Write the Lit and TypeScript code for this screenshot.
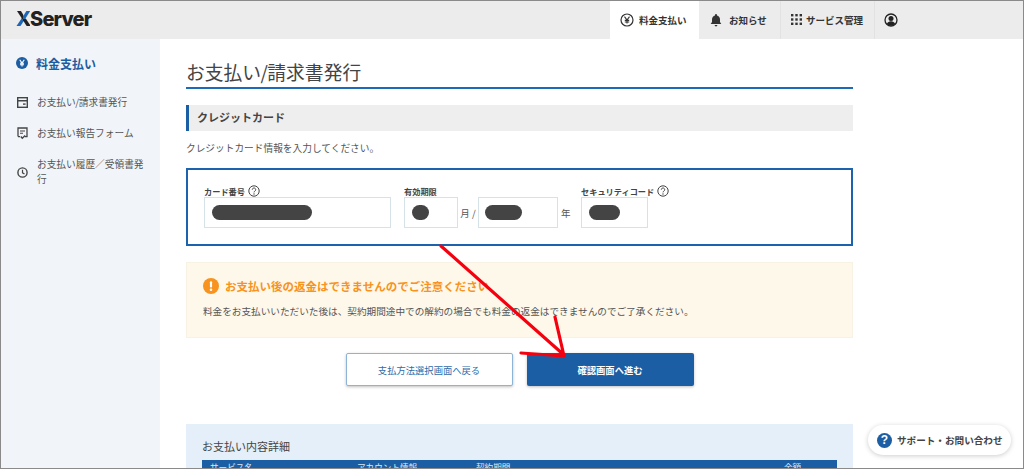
import { LitElement, html, css } from "lit";
import { customElement } from "lit/decorators.js";

const help = html`<svg class="help" width="12" height="12" viewBox="0 0 12 12"><circle cx="6" cy="6" r="5.2" fill="none" stroke="#444" stroke-width="1"/><path d="M4.3 4.7a1.7 1.7 0 1 1 2.6 1.4c-.6.4-.9.6-.9 1.3" fill="none" stroke="#444" stroke-width="1"/><circle cx="6" cy="9" r=".7" fill="#444"/></svg>`;

@customElement("app-root")
export class AppRoot extends LitElement {
  static styles = css`
    :host { display: block; width: 1024px; height: 469px; position: relative; overflow: hidden; font-family: "Noto Sans CJK JP", "Noto Sans", sans-serif; color: #444; background: #fff; }
    .frame { box-sizing: border-box; width: 1024px; height: 469px; border: 1px solid #8a8a8a; display: flex; flex-direction: column; overflow: hidden; }
    header { flex: none; height: 38px; background: #ececec; display: flex; justify-content: space-between; align-items: stretch; padding-left: 15px; }
    .logo { font: 800 20px/37px "Inter", "Liberation Sans", sans-serif; color: #222; letter-spacing: -0.85px; }
    .logo .x { background: conic-gradient(#1c67b8 0 90deg, #222 90deg 180deg, #1c67b8 180deg 270deg, #222 270deg 360deg); -webkit-background-clip: text; background-clip: text; color: transparent; }
    nav { display: flex; }
    .tab { display: flex; align-items: center; gap: 5px; font-size: 9.5px; font-weight: 700; color: #333; border-left: 1px solid #e2e2e2; box-sizing: border-box; padding-bottom: 1px; }
    .tab.active { background: #fff; border-left: 0; width: 89px; padding-left: 10px; }
    .tab.t2 { width: 81px; padding-left: 11px; border-left: 0; gap: 7px; }
    .tab.t3 { width: 94px; padding-left: 10px; gap: 4px; }
    .tab.t4 { width: 149px; padding-left: 9px; }
    .body { flex: 1; display: flex; min-height: 0; }
    aside { flex: none; width: 159px; background: #f1f5f9; box-sizing: border-box; padding: 16px 15px 0 15px; }
    .side-title { display: flex; align-items: center; gap: 8px; font-size: 12px; font-weight: 700; color: #1c5ea3; height: 16px; }
    .side-item { display: flex; align-items: center; gap: 9px; font-size: 9.7px; color: #555; line-height: 15px; margin-left: 1px; }
    .side-item svg { flex: none; }
    .side-list { display: flex; flex-direction: column; margin-top: 24px; gap: 16px; }
    .slash { margin: 0 -0.4px; }
    main { flex: 1; padding: 19px 0 0 26px; min-width: 0; }
    .content { width: 667px; }
    h1 { margin: 0; font-size: 18.8px; font-weight: 400; color: #444; height: 29px; line-height: 27px; border-bottom: 2px solid #1c6ab8; }
    h1 .slash { margin: 0 -0.6px; }
    h2 { margin: 16px 0 0; height: 26px; box-sizing: border-box; background: #eee; border-left: 3px solid #1c5ea3; padding-left: 8px; font-size: 11px; font-weight: 700; line-height: 25px; color: #444; }
    .lead { margin: 10px 0 0; font-size: 9.7px; line-height: 15px; color: #555; }
    .card { margin-top: 12px; height: 78px; box-sizing: border-box; border: 2px solid #1c62ad; padding: 13px 16px 0; display: flex; gap: 13px; }
    .field label { display: flex; align-items: flex-end; gap: 3px; height: 14px; font-size: 8.2px; line-height: 12px; font-weight: 700; color: #444; white-space: nowrap; }
    .inputs { display: flex; align-items: center; }
    .box { box-sizing: border-box; height: 31px; border: 1px solid #d5e2e8; display: flex; align-items: center; padding-left: 7px; }
    .blot { height: 15px; border-radius: 8px; background: #444; }
    .unit { font-size: 9.500px; color: #555; }
    .month { width: 20px; text-align: center; }
    .year { width: 23px; padding-left: 3px; box-sizing: border-box; }
    .sec-code { margin-left: -13px; }
    .warn { margin-top: 16px; height: 76px; box-sizing: border-box; background: #fef8ea; border: 1px solid #f8f2e4; padding: 14px 16px 0; }
    .warn-title { display: flex; align-items: center; gap: 6px; font-size: 11.500px; font-weight: 700; color: #f7931e; height: 18px; }
    .warn p { margin: 9px 0 0; font-size: 9.65px; line-height: 15px; color: #555; white-space: nowrap; }
    .actions { margin-top: 15px; display: flex; justify-content: center; gap: 14px; }
    .btn { box-sizing: border-box; width: 167px; height: 33px; border-radius: 2px; display: flex; align-items: center; justify-content: center; font-size: 9.3px; box-shadow: 0 1px 3px rgba(0,0,0,.25); }
    .btn.sec { background: #fff; border: 1px solid #8db4d6; color: #2e6ba8; }
    .btn.pri { background: #1c5ea3; color: #fff; font-weight: 700; }
    .detail { margin-top: 38px; background: #e5eff9; padding: 15px 16px 0; height: 60px; box-sizing: border-box; }
    .detail h3 { margin: 0; font-size: 11px; font-weight: 400; line-height: 15px; color: #444; }
    .thead { margin-top: 6px; height: 24px; background: #1c5ea3; color: #dfe9f3; font-size: 8.6px; line-height: 14px; display: grid; grid-template-columns: 147px 119px 308px 1fr; padding-left: 8px; }
    .support { position: absolute; left: 868px; top: 425px; width: 143px; height: 30px; border-radius: 15px; background: #fff; box-shadow: 0 1px 5px rgba(0,0,0,.2); display: flex; align-items: center; gap: 5px; padding-left: 9px; box-sizing: border-box; font-size: 9.6px; font-weight: 700; color: #444; }
    .q { width: 15px; height: 15px; border-radius: 50%; background: #1c5ea3; color: #fff; display: flex; align-items: center; justify-content: center; font: 700 12px "Liberation Sans", sans-serif; }
    .arrow { position: absolute; left: 0; top: 0; pointer-events: none; }
  `;

  render() {
    return html`
      <div class="frame">
        <header>
          <div class="logo"><span class="x">X</span>Server</div>
          <nav>
            <div class="tab active">
              <svg width="14" height="14" viewBox="0 0 14 14"><circle cx="7" cy="7" r="6" fill="none" stroke="#333" stroke-width="1.2"/><path d="M4.5 3.6 7 7l2.5-3.4M7 7v3.6M4.8 7.4h4.4M4.8 9h4.4" fill="none" stroke="#333" stroke-width="1.1"/></svg>
              料金支払い
            </div>
            <div class="tab t2">
              <svg width="12" height="14" viewBox="0 0 12 14"><path d="M6 1a1 1 0 0 1 1 1v.4c1.8.5 3 2 3 4V9l1.3 2H.7L2 9V6.400c0-2 1.200-3.500 3-4V2a1 1 0 0 1 1-1Z" fill="#333"/><path d="M4.600 12h2.800a1.400 1.400 0 0 1-2.800 0Z" fill="#333"/></svg>
              お知らせ
            </div>
            <div class="tab t3">
              <svg width="11" height="11" viewBox="0 0 11 11" fill="#333"><rect x="0" y="0" width="2.400" height="2.400"/><rect x="4.300" y="0" width="2.400" height="2.400"/><rect x="8.600" y="0" width="2.400" height="2.400"/><rect x="0" y="4.300" width="2.400" height="2.400"/><rect x="4.300" y="4.300" width="2.400" height="2.400"/><rect x="8.600" y="4.300" width="2.400" height="2.400"/><rect x="0" y="8.600" width="2.400" height="2.400"/><rect x="4.300" y="8.600" width="2.400" height="2.400"/><rect x="8.600" y="8.600" width="2.400" height="2.400"/></svg>
              サービス管理
            </div>
            <div class="tab t4">
              <svg width="14" height="14" viewBox="0 0 14 14"><circle cx="7" cy="7" r="6" fill="none" stroke="#222" stroke-width="1.300"/><circle cx="7" cy="5.400" r="2.500" fill="#222"/><path d="M2.800 11c.8-1.900 2.300-2.800 4.200-2.800s3.400.9 4.200 2.800a6 6 0 0 1-8.400 0Z" fill="#222"/></svg>
            </div>
          </nav>
        </header>
        <div class="body">
          <aside>
            <div class="side-title">
              <svg width="12" height="12" viewBox="0 0 12 12"><circle cx="6" cy="6" r="6" fill="#1c5ea3"/><path d="M3.700 2.800 6 6l2.300-3.200M6 6v3.400M4 6.300h4M4 7.800h4" fill="none" stroke="#fff" stroke-width="1.100"/></svg>
              料金支払い
            </div>
            <div class="side-list">
              <div class="side-item">
                <svg width="11" height="11" viewBox="0 0 11 11"><rect x=".7" y=".7" width="9.600" height="9.600" fill="none" stroke="#444" stroke-width="1.400"/><rect x="1" y="3" width="9" height="1.500" fill="#444"/><rect x="6" y="6.400" width="2.600" height="1.400" fill="#444"/></svg>
                <span>お支払い<span class="slash">/</span>請求書発行</span>
              </div>
              <div class="side-item">
                <svg width="11" height="13" viewBox="0 0 11 13"><path d="M1 9.500V1h9v8.500" fill="none" stroke="#444" stroke-width="1.300"/><path d="M1 9.600h2M8 9.600h2.500" stroke="#444" stroke-width="1.200"/><path d="M3 4h5M3 6.300h3" stroke="#444" stroke-width="1.100"/><path d="M3.800 9.500 5.300 11.300 8.200 8.500" fill="none" stroke="#444" stroke-width="1.400"/></svg>
                <span>お支払い報告フォーム</span>
              </div>
              <div class="side-item">
                <svg width="11" height="11" viewBox="0 0 11 11"><circle cx="5.500" cy="5.500" r="4.600" fill="none" stroke="#444" stroke-width="1.400"/><path d="M5.500 2.800v3l2 1.200" fill="none" stroke="#444" stroke-width="1.200"/></svg>
                <span>お支払い履歴／受領書発行</span>
              </div>
            </div>
          </aside>
          <main>
            <div class="content">
              <h1>お支払い<span class="slash">/</span>請求書発行</h1>
              <h2>クレジットカード</h2>
              <p class="lead">クレジットカード情報を入力してください。</p>
              <div class="card">
                <div class="field">
                  <label>カード番号 ${help}</label>
                  <div class="box" style="width:187px"><div class="blot" style="width:100px"></div></div>
                </div>
                <div class="field">
                  <label>有効期限</label>
                  <div class="inputs">
                    <div class="box" style="width:54px"><div class="blot" style="width:17px"></div></div>
                    <span class="unit month">月 /</span>
                    <div class="box" style="width:80px;padding-left:6px"><div class="blot" style="width:37px"></div></div>
                    <span class="unit year">年</span>
                  </div>
                </div>
                <div class="field sec-code">
                  <label>セキュリティコード ${help}</label>
                  <div class="box" style="width:67px"><div class="blot" style="width:31px"></div></div>
                </div>
              </div>
              <div class="warn">
                <div class="warn-title">
                  <svg width="16" height="16" viewBox="0 0 16 16"><circle cx="8" cy="8" r="8" fill="#f7931e"/><rect x="6.900" y="3.200" width="2.200" height="6.400" rx="1" fill="#fff"/><circle cx="8" cy="11.800" r="1.300" fill="#fff"/></svg>
                  お支払い後の返金はできませんのでご注意ください
                </div>
                <p>料金をお支払いいただいた後は、契約期間途中での解約の場合でも料金の返金はできませんのでご了承ください。</p>
              </div>
              <div class="actions">
                <div class="btn sec">支払方法選択画面へ戻る</div>
                <div class="btn pri">確認画面へ進む</div>
              </div>
              <div class="detail">
                <h3>お支払い内容詳細</h3>
                <div class="thead"><span>サービス名</span><span>アカウント情報</span><span>契約期間</span><span>金額</span></div>
              </div>
            </div>
          </main>
        </div>
      </div>
      <div class="support"><span class="q">?</span>サポート・お問い合わせ</div>
      <svg class="arrow" width="1024" height="469" viewBox="0 0 1024 469" fill="none" stroke="#f5000f" stroke-width="3.200" stroke-linecap="round"><path d="M441 246 564 355M555 317l9 39M521 353l43 3"/></svg>
    `;
  }
}
